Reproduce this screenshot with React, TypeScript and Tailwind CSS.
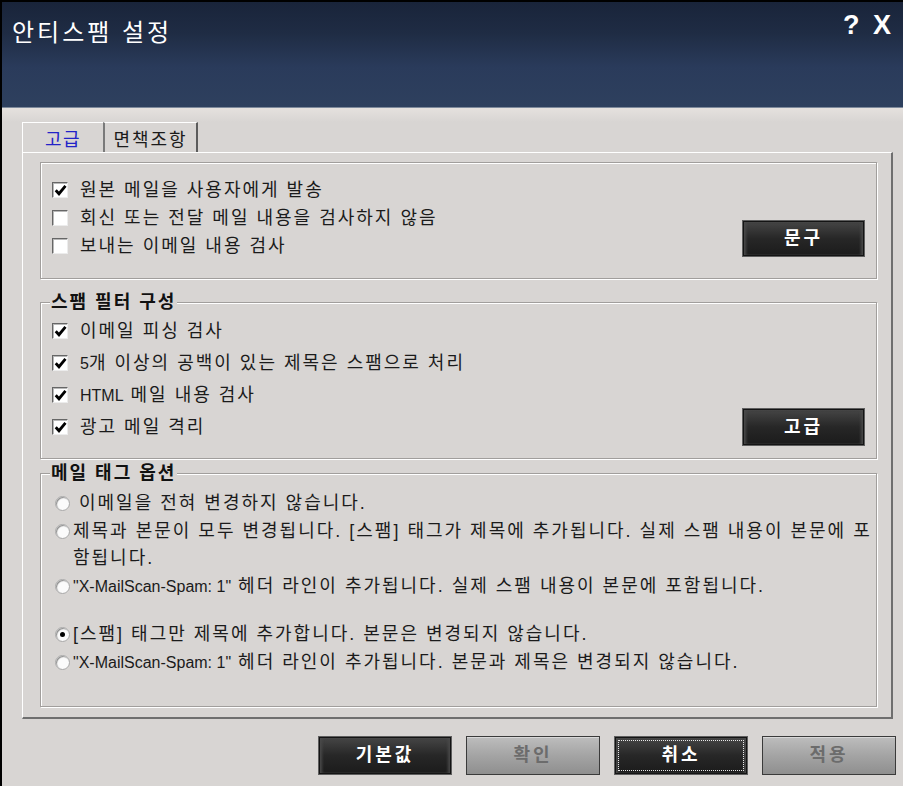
import type { ReactNode } from 'react'

const rowText = "text-[18px] tracking-[2px] text-[#1b1b1b] leading-[22px]"
const latin = "tracking-normal text-[16px]"

const CheckBox = ({ on }: { on: boolean }) => (
  <span className="w-[16px] h-[16px] shrink-0 bg-white border border-t-[#666] border-l-[#666] border-r-[#ececec] border-b-[#ececec] shadow-[inset_1px_1px_0_#b8b8b8] flex items-center justify-center">
    {on && (
      <svg width="13" height="13" viewBox="0 0 12 12">
        <path d="M1.6 5.8 L4.6 9 L10.6 1.8" fill="none" stroke="#000" strokeWidth="2.6" />
      </svg>
    )}
  </span>
)

const Radio = ({ on }: { on: boolean }) => (
  <span className="w-[15px] h-[15px] shrink-0 rounded-full bg-[#fbfbfb] border border-[#a8a8a8] shadow-[inset_1px_1px_1px_#8c8c8c] flex items-center justify-center">
    {on && <span className="w-[5px] h-[5px] rounded-full bg-black" />}
  </span>
)

const CheckRow = ({ on, h, children }: { on: boolean; h: string; children: ReactNode }) => (
  <div className={`flex items-center gap-[12px] ${h}`}>
    <CheckBox on={on} />
    <span className={rowText}>{children}</span>
  </div>
)

const RadioRow = ({ on, pad = '', children }: { on: boolean; pad?: string; children: ReactNode }) => (
  <div className="flex items-start gap-[3px]">
    <span className="h-[28px] flex items-center">
      <Radio on={on} />
    </span>
    <span className={`${rowText} leading-[27px] pt-[1px] ${pad}`}>{children}</span>
  </div>
)

type BtnKind = 'dark' | 'off'

const Button = ({ label, kind, focus, w, h = 'h-[38px]' }: { label: string; kind: BtnKind; focus?: boolean; w: string; h?: string }) => {
  const look =
    kind === 'dark'
      ? 'bg-linear-to-b from-[#474747] via-[#272727] to-[#1b1b1b] border-[#5e5e5e] text-white shadow-[inset_0_0_0_1px_#141414,inset_3px_0_3px_#4a4a4a,inset_-3px_0_3px_#4a4a4a]'
      : 'bg-linear-to-b from-[#bdbdbd] via-[#a4a4a4] to-[#8f8f8f] border-[#3a3a3a] text-[#6c6c6c] shadow-[inset_0_1px_0_#d8d8d8]'
  return (
    <button className={`${w} ${h} border ${look} text-[18px] font-bold tracking-[3px] p-[3px] flex`}>
      <span
        className={`flex-1 flex items-center justify-center border ${
          focus ? 'border-dotted border-[#e8e8e8]' : 'border-transparent'
        }`}
      >
        {label}
      </span>
    </button>
  )
}

const Group = ({ title, className, children }: { title: string; className: string; children: ReactNode }) => (
  <fieldset
    className={`w-[837px] border border-[#a19e9c] shadow-[inset_1px_1px_0_#fff,1px_1px_0_#fff] ${className}`}
  >
    <legend className="ml-[9px] px-[1px] bg-[#d8d5d3] text-[18px] font-bold tracking-[2px] leading-[22px] text-[#111]">
      {title}
    </legend>
    {children}
  </fieldset>
)

export default function App() {
  return (
    <div className="w-[903px] h-[786px] overflow-hidden border-l-2 border-t-2 border-black bg-[#d8d5d3] font-['Liberation_Sans','Noto_Sans_CJK_KR',sans-serif] flex flex-col">
      {/* title bar */}
      <div className="h-[106px] shrink-0 border-b border-[#7e8a9c] bg-[linear-gradient(180deg,#19243a_0%,#1f2c44_30%,#2a3b5b_62%,#2e405e_100%)] flex justify-between items-start pl-[10px] pr-[9px] pt-[16px]">
        <span className="text-white text-[24px] tracking-[3px] leading-[30px]">안티스팸 설정</span>
        <span className="text-white text-[27px] font-bold leading-[27px] -mt-[6px] tracking-[3px]">? X</span>
      </div>

      <div className="flex-1 bg-[linear-gradient(180deg,#e5e1de_0px,#d8d5d3_14px)] pt-[14px]">
        {/* tabs */}
        <div className="ml-[20px] flex h-[30px]">
          <div className="w-[81px] border-t border-l border-white flex items-center justify-center pt-[6px] text-[18px] tracking-[1.5px] text-[#2323c8]">
            고급
          </div>
          <div className="w-[95px] border-t border-white border-l-2 border-l-[#7a7a7a] border-r-2 border-r-[#5c5c5c] flex items-center justify-center pt-[6px] text-[18px] tracking-[2px] text-[#1b1b1b]">
            면책조항
          </div>
        </div>

        {/* tab page */}
        <div className="ml-[20px] w-[871px] h-[567px] border-t border-l border-white border-r-2 border-b-2 border-r-[#6f6f6f] border-b-[#6f6f6f] pl-[17px] pt-[9px]">
          <div className="w-[837px] h-[117px] border border-[#a19e9c] shadow-[inset_1px_1px_0_#fff,1px_1px_0_#fff] flex justify-between">
            <div className="pt-[13px] pl-[11px]">
              <CheckRow on h="h-[28px]">원본 메일을 사용자에게 발송</CheckRow>
              <CheckRow on={false} h="h-[28px]">회신 또는 전달 메일 내용을 검사하지 않음</CheckRow>
              <CheckRow on={false} h="h-[28px]">보내는 이메일 내용 검사</CheckRow>
            </div>
            <div className="flex items-end pb-[21px] pr-[11px]">
              <Button label="문구" kind="dark" w="w-[123px]" h="h-[37px]" />
            </div>
          </div>

          <Group title="스팸 필터 구성" className="mt-[12px]">
            <div className="flex justify-between pt-[2px] pb-[15px]">
              <div className="pl-[11px]">
                <CheckRow on h="h-[32px]">이메일 피싱 검사</CheckRow>
                <CheckRow on h="h-[32px]">
                  <span className={latin}>5</span>개 이상의 공백이 있는 제목은 스팸으로 처리
                </CheckRow>
                <CheckRow on h="h-[32px]">
                  <span className={latin}>HTML</span> 메일 내용 검사
                </CheckRow>
                <CheckRow on h="h-[32px]">광고 메일 격리</CheckRow>
              </div>
              <div className="flex items-end pr-[11px] -mb-[3px]">
                <Button label="고급" kind="dark" w="w-[123px]" />
              </div>
            </div>
          </Group>

          <Group title="메일 태그 옵션" className="mt-[3px]">
            <div className="pl-[14px] pt-[5px] pb-[30px]">
              <RadioRow on={false} pad="pl-[6px]">이메일을 전혀 변경하지 않습니다.</RadioRow>
              <RadioRow on={false}>
                제목과 본문이 모두 변경됩니다. [스팸] 태그가 제목에 추가됩니다. 실제 스팸 내용이 본문에 포
                <br />
                함됩니다.
              </RadioRow>
              <RadioRow on={false}>
                <span className={latin}>"X-MailScan-Spam: 1"</span> 헤더 라인이 추가됩니다. 실제 스팸 내용이 본문에 포함됩니다.
              </RadioRow>
              <div className="mt-[20px]">
                <RadioRow on>[스팸] 태그만 제목에 추가합니다. 본문은 변경되지 않습니다.</RadioRow>
              </div>
              <RadioRow on={false}>
                <span className={latin}>"X-MailScan-Spam: 1"</span> 헤더 라인이 추가됩니다. 본문과 제목은 변경되지 않습니다.
              </RadioRow>
            </div>
          </Group>
        </div>

        {/* dialog buttons */}
        <div className="mt-[17px] flex justify-end gap-[14px] pr-[7px]">
          <Button label="기본값" kind="dark" w="w-[134px]" h="h-[39px]" />
          <Button label="확인" kind="off" w="w-[134px]" h="h-[39px]" />
          <Button label="취소" kind="dark" focus w="w-[134px]" h="h-[39px]" />
          <Button label="적용" kind="off" w="w-[134px]" h="h-[39px]" />
        </div>
      </div>
    </div>
  )
}
